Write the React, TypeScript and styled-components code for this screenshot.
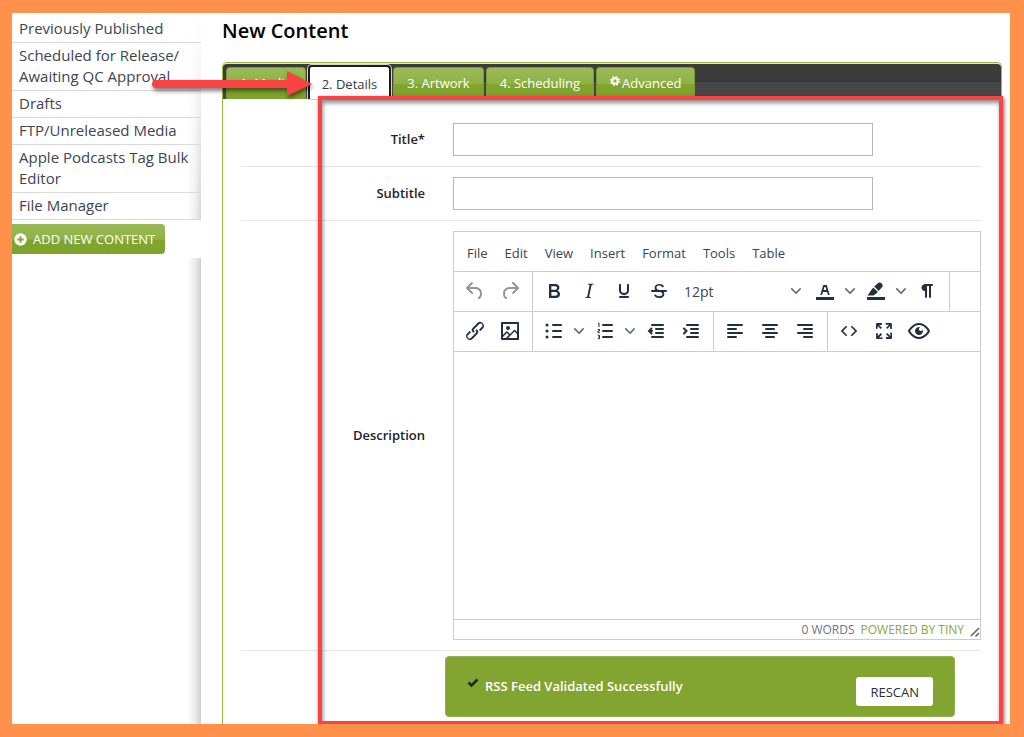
import React from "react";
import styled, { createGlobalStyle, css } from "styled-components";

const GlobalStyle = createGlobalStyle`
  *, *::before, *::after { box-sizing: border-box; }
  body { margin: 0; background: #ff914d; }
  body, button, input, select { font-family: "Open Sans", "Noto Sans", sans-serif; }
  button { cursor: pointer; }
`;

const Frame = styled.div`
  display: flex;
  min-height: 100vh;
  padding: 13px 14px 13px 12px;
  background: #ff914d;
`;

const Page = styled.div`
  position: relative;
  display: flex;
  flex: 1;
  min-width: 0;
  overflow: hidden;
  background: #fff;
`;

const Sidebar = styled.nav`
  display: flex;
  flex-direction: column;
  flex: 0 0 189px;
  padding-top: 3px;
  background: #fff;
`;

const SideList = styled.ul`
  margin: 0;
  padding: 0;
  list-style: none;
  background:
    linear-gradient(to bottom, #fff 0, rgba(255, 255, 255, 0) 100%),
    linear-gradient(to left, #d6d6d6 0, #f0f0f0 6px, rgba(255, 255, 255, 0) 14px);
`;

const SideItem = styled.li`
  padding: 2px 6px 3px 7px;
  border-bottom: 1px solid #d9d9d9;
  font-size: 15px;
  line-height: 21px;
`;

const SideLink = styled.a`
  color: #3d4550;
  text-decoration: none;
`;

const greenFill = css`
  background: linear-gradient(to bottom, #9aba57 0, #8fb247 50%, #80a42e 55%, #7fa42c 100%);
`;

const AddButton = styled.button`
  display: flex;
  align-items: center;
  align-self: flex-start;
  gap: 6px;
  height: 30px;
  margin: 4px 0;
  padding: 0 10px 0 2px;
  border: 0;
  border-radius: 0 4px 4px 0;
  ${greenFill}
  color: #fff;
  font-size: 13px;
  line-height: 20px;
  white-space: nowrap;
`;

const SideFill = styled.div`
  flex: 1;
  background: linear-gradient(to left, #cfcfcf 0, #e9e9e9 5px, rgba(255, 255, 255, 0) 14px);
`;

const Main = styled.main`
  display: flex;
  flex-direction: column;
  flex: 1;
  min-width: 0;
  padding: 0 8px 0 21px;
`;

const Heading = styled.h1`
  margin: 0 0 13px;
  color: #000;
  font-size: 20px;
  font-weight: 600;
  line-height: 36px;
`;

const Panel = styled.section`
  position: relative;
  flex: 1;
  border: 1px solid #93ba45;
  border-bottom: 0;
  border-radius: 5px 5px 0 0;
`;

const TabBar = styled.div`
  display: flex;
  align-items: flex-end;
  gap: 2px;
  height: 36px;
  padding: 0 3px;
  border-top: 1px solid #dfe5d6;
  border-radius: 4px 4px 0 0;
  background: linear-gradient(to bottom, #3b3b3b 0, #3b3b3b 50%, #464646 51%, #464646 100%);
`;

const Tab = styled.button<{ $active?: boolean }>`
  display: flex;
  align-items: center;
  gap: 2px;
  height: 32px;
  padding: 0 13px 1px;
  border: 1px solid #7c9c33;
  border-bottom: 0;
  border-radius: 4px 4px 0 0;
  ${greenFill}
  color: #fff;
  font-size: 13px;
  line-height: 20px;
  white-space: nowrap;

  ${(p) =>
    p.$active &&
    css`
      height: 34px;
      padding: 1px 12px 0;
      border: 2px solid #1c1c1c;
      border-bottom: 0;
      box-shadow: 0 0 0 1px #d5d5d5;
      background: #fff;
      color: #333b45;
    `}
`;

const Form = styled.form`
  padding: 14px 20px 0 18px;
`;

const Row = styled.div<{ $last?: boolean }>`
  display: grid;
  grid-template-columns: 184px minmax(0, 1fr);
  column-gap: ${(p) => (p.$last ? "20px" : "28px")};
  align-items: center;
  padding: ${(p) => (p.$last ? "5px 0" : "10px 0")};
  border-bottom: ${(p) => (p.$last ? "0" : "1px solid #e6e6e6")};
`;

const Label = styled.label`
  padding-bottom: 2px;
  color: #1f2329;
  font-size: 13px;
  font-weight: 600;
  line-height: 20px;
  text-align: right;
`;

const TextInput = styled.input`
  width: 100%;
  max-width: 420px;
  height: 33px;
  padding: 0 8px;
  border: 1px solid #b5b5b5;
  background: #fff;
  font-size: 14px;
`;

const Editor = styled.div`
  display: flex;
  flex-direction: column;
  border: 1px solid #ccc;
  background: #fff;
`;

const MenuBar = styled.div`
  display: flex;
  align-items: center;
  gap: 17px;
  height: 40px;
  padding: 2px 13px 0;
  border-bottom: 1px solid #ccc;
`;

const MenuButton = styled.button`
  padding: 0;
  border: 0;
  background: none;
  color: #3a4452;
  font-size: 13px;
  line-height: 20px;
`;

const Toolbar = styled.div`
  display: flex;
  height: 40px;
  border-bottom: 1px solid #ccc;
`;

const Group = styled.div<{ $open?: boolean }>`
  display: flex;
  align-items: center;
  padding: 0 5px 1px 3px;
  border-right: ${(p) => (p.$open ? "0" : "1px solid #ccc")};
`;

const ToolButton = styled.button<{ $dim?: boolean }>`
  display: flex;
  align-items: center;
  justify-content: center;
  width: 35px;
  height: 34px;
  padding: 0;
  border: 0;
  background: none;
  color: #222f3e;
  opacity: ${(p) => (p.$dim ? 0.5 : 1)};
`;

const ArrowButton = styled(ToolButton)`
  width: 16px;
  opacity: 0.7;
`;

const SizePicker = styled.div`
  display: grid;
  align-items: center;
  width: 131px;

  > * { grid-area: 1 / 1; }
  > svg { justify-self: end; margin-right: 6px; pointer-events: none; opacity: 0.7; }
`;

const SizeSelect = styled.select`
  width: 100%;
  height: 34px;
  padding: 0 8px;
  border: 0;
  appearance: none;
  background: none;
  color: #3a4452;
  font-size: 14px;
`;

const EditArea = styled.div`
  height: 267px;
  outline: 0;
`;

const StatusBar = styled.div`
  display: flex;
  align-items: center;
  justify-content: flex-end;
  gap: 6px;
  height: 20px;
  border-top: 1px solid #ccc;
  color: #6c7580;
  font-size: 12px;
  line-height: 18px;
`;

const TinyLink = styled.a`
  color: #86a93c;
  text-decoration: none;
`;

const Notice = styled.div`
  display: flex;
  align-items: center;
  max-width: 510px;
  height: 61px;
  padding: 0 21px;
  border: 1px solid #92b04b;
  border-radius: 4px;
  background: #82a431;
  color: #fff;
`;

const NoticeText = styled.span`
  flex: 1;
  margin-left: 6px;
  padding-bottom: 2px;
  font-size: 13px;
  font-weight: 600;
  line-height: 20px;
`;

const RescanButton = styled.button`
  align-self: flex-end;
  height: 29px;
  margin-bottom: 10px;
  padding: 0 14px;
  border: 0;
  border-radius: 3px;
  background: #fff;
  color: #2b2f36;
  font-size: 13px;
  line-height: 20px;
`;

const Highlight = styled.div`
  position: absolute;
  top: 33px;
  right: -2px;
  bottom: -1px;
  left: 95px;
  border: 4px solid #fb4343;
  box-shadow: 1px 2px 4px rgba(0, 0, 0, 0.6), inset 1px 3px 4px rgba(0, 0, 0, 0.45);
  pointer-events: none;
`;

const Arrow = styled.svg`
  position: absolute;
  top: 4px;
  left: -74px;
  overflow: visible;
  filter: drop-shadow(1px 3px 2px rgba(0, 0, 0, 0.5));
  pointer-events: none;
`;

const paths: Record<string, string> = {
  undo: "M6.4 8H12c3.7 0 6.2 2 6.8 5.1.6 2.7-.4 5.6-2.3 6.8a1 1 0 01-1-1.8c1.1-.6 1.8-2.7 1.4-4.6-.5-2.1-2.1-3.5-4.9-3.5H6.4l3.3 3.3a1 1 0 11-1.4 1.4l-5-5a1 1 0 010-1.4l5-5a1 1 0 011.4 1.4L6.4 8z",
  redo: "M17.6 10H12c-2.8 0-4.4 1.4-4.9 3.5-.4 2 .3 4 1.4 4.6a1 1 0 11-1 1.8c-2-1.2-2.9-4.1-2.3-6.8.6-3 3-5.1 6.8-5.1h5.6l-3.3-3.3a1 1 0 111.4-1.4l5 5a1 1 0 010 1.4l-5 5a1 1 0 01-1.4-1.4l3.3-3.3z",
  bold: "M7.8 19c-.3 0-.5 0-.6-.2l-.2-.5V5.7c0-.2 0-.4.2-.5l.6-.2h5c1.5 0 2.7.3 3.5 1 .7.6 1.1 1.4 1.1 2.5a3 3 0 01-.6 1.9c-.4.6-1 1-1.6 1.2.4.1.9.3 1.3.6s.8.7 1 1.2c.4.4.5 1 .5 1.6 0 1.3-.4 2.3-1.3 3-.8.7-2.1 1-3.8 1H7.8zm5-8.3c.6 0 1.2-.1 1.6-.5.4-.3.6-.7.6-1.3 0-1.1-.8-1.7-2.3-1.7H9.3v3.5h3.4zm.5 6c.7 0 1.3-.1 1.7-.4.4-.4.6-.9.6-1.5s-.2-1-.7-1.4c-.4-.3-1-.4-2-.4H9.4v3.8h4z",
  italic: "M16.7 4.7l-.1.9h-.3c-.6 0-1 0-1.4.3-.3.3-.4.6-.5 1.1l-2.1 9.8v.6c0 .5.4.8 1.4.8h.2l-.2.8H8l.2-.8h.2c1.1 0 1.8-.5 2-1.5l2-9.8.1-.5c0-.6-.4-.8-1.4-.8h-.3l.2-.9h5.8z",
  underline: "M16 5c.6 0 1 .4 1 1v5.5a4 4 0 01-.4 1.8l-1 1.4a5.3 5.3 0 01-5.5 1 5 5 0 01-1.6-1c-.5-.4-.8-.9-1.1-1.4a4 4 0 01-.4-1.8V6c0-.6.4-1 1-1s1 .4 1 1v5.5c0 .3 0 .6.2 1l.6.7a3.3 3.3 0 002.2.8 3.4 3.4 0 002.2-.8c.3-.2.4-.5.6-.8l.2-.9V6c0-.6.4-1 1-1zM8 17h8c.6 0 1 .4 1 1s-.4 1-1 1H8a1 1 0 010-2z",
  strike: "M15.6 8.5c-.5-.7-1-1.1-1.3-1.3-.6-.4-1.3-.6-2-.6-2.7 0-2.8 1.7-2.8 2.1 0 1.6 1.8 2 3.2 2.3 4.4.9 4.6 2.8 4.6 3.9 0 1.4-.7 4.1-5 4.1A6.2 6.2 0 017 16.4l1.5-1.1c.4.6 1.6 2 3.7 2 1.6 0 2.5-.4 3-1.2.4-.8.3-2-.8-2.6-.7-.4-1.6-.7-2.9-1-1-.2-3.9-.8-3.9-3.6C7.6 6 10.3 5 12.4 5c2.9 0 4.2 1.6 4.7 2.4l-1.5 1.1z",
  link: "M6.2 12.3a1 1 0 011.4 1.4l-2.1 2a2 2 0 102.7 2.8l4.8-4.8a1 1 0 000-1.4 1 1 0 111.4-1.3 2.9 2.9 0 010 4L9.6 20a3.9 3.9 0 01-5.5-5.5l2-2zm11.6-.6a1 1 0 01-1.4-1.4l2-2a2 2 0 10-2.6-2.8L11 10.3a1 1 0 000 1.4A1 1 0 119.6 13a2.9 2.9 0 010-4L14.4 4a3.9 3.9 0 015.5 5.5l-2 2z",
  image: "M5 15.7l3.3-3.2c.3-.3.7-.3 1 0L12 15l4.1-4c.3-.4.8-.4 1 0l2 1.9V5H5v10.7zM5 18V19h3l2.8-2.9-2-2L5 17.9zm14-3l-2.5-2.4-6.4 6.5H19v-4zM4 3h16c.6 0 1 .4 1 1v16c0 .6-.4 1-1 1H4a1 1 0 01-1-1V4c0-.6.4-1 1-1zm6 8a2 2 0 100-4 2 2 0 000 4z",
  code: "M9.8 15.7c.3.3.3.8 0 1-.3.4-.9.4-1.2 0l-4.4-4.1a.8.8 0 010-1.2l4.4-4.2c.3-.3.9-.3 1.2 0 .3.3.3.8 0 1.1L6 12l3.8 3.7zM14.2 15.7c-.3.3-.3.8 0 1 .4.4.9.4 1.2 0l4.4-4.1c.3-.3.3-.9 0-1.2l-4.4-4.2a.8.8 0 00-1.2 0c-.3.3-.3.8 0 1.1L18 12l-3.8 3.7z",
  fullscreen: "M15.3 10l-1.2-1.3 2.9-3h-2.3a.9.9 0 110-1.7H19c.5 0 .9.4.9.9v4.4a.9.9 0 11-1.8 0V7l-2.9 3zm0 4l3 3v-2.3a.9.9 0 111.7 0V19c0 .5-.4.9-.9.9h-4.4a.9.9 0 110-1.8H17l-3-2.9 1.3-1.2zM10 15.4l-2.9 3h2.3a.9.9 0 110 1.7H5a.9.9 0 01-.9-.9v-4.4a.9.9 0 111.8 0V17l2.9-3 1.2 1.3zM8.7 10L5.7 7v2.3a.9.9 0 01-1.7 0V5c0-.5.4-.9.9-.9h4.4a.9.9 0 010 1.8H7l3 2.9-1.3 1.2z",
  preview: "M3.5 12.5c.5.8 1.1 1.6 1.8 2.3 2 2 4.2 3.2 6.7 3.2s4.7-1.2 6.7-3.2a16.2 16.2 0 002.1-2.8 15.7 15.7 0 00-2.1-2.8c-2-2-4.2-3.2-6.7-3.2a9.3 9.3 0 00-6.7 3.2A16.2 16.2 0 003.2 12c0 .2.2.3.3.5zm-2.4-1l.7-1.2L4 7.8C6.2 5.4 8.9 4 12 4c3 0 5.8 1.4 8.1 3.8a18.2 18.2 0 012.8 3.7v1l-.7 1.2-2.1 2.5c-2.3 2.4-5 3.8-8.1 3.8-3 0-5.8-1.4-8.1-3.8a18.2 18.2 0 01-2.8-3.7 1 1 0 010-1zm12-3.3a2 2 0 102.7 2.6 4 4 0 11-2.6-2.6z",
  color: "M3 18h18v3H3zM8.7 16h-.8a.5.5 0 01-.5-.6l2.7-9c.1-.3.3-.4.5-.4h2.8c.2 0 .4.1.5.4l2.7 9a.5.5 0 01-.5.6h-.8a.5.5 0 01-.4-.4l-.7-2.2c0-.3-.3-.4-.5-.4h-3.4c-.2 0-.4.1-.5.4l-.7 2.2c0 .3-.2.4-.4.4zm2.6-7.6l-.6 2a.5.5 0 00.5.6h1.6a.5.5 0 00.5-.6l-.6-2c0-.3-.3-.4-.5-.4h-.4c-.2 0-.4.1-.5.4z",
  highlight: "M3 18h18v3H3zM3.500 16.600L7 11.500l2.300-3.100 4.600 4.500-3.300 2.900c-1 .8-2.100.8-3.500.8zM10.200 7.500l3.400-3.100a2.900 2.900 0 014.100 4.100l-3 3.500z",
  pilcrow: "M10 5h7a1 1 0 010 2h-1v11a1 1 0 01-2 0V7h-2v11a1 1 0 01-2 0v-6c-.5 0-1 0-1.4-.3A3.4 3.4 0 016.8 10a3.3 3.3 0 010-2.8 3.4 3.4 0 011.8-1.8L10 5z",
};

const strokes: Record<string, string> = {
  bullets: "M11 6h8M11 12h8M11 18h8",
  numbers: "M10 6h9M10 12h9M10 18h9",
  outdent: "M8 6h11M12 10h7M12 14h7M8 18h11M7.500 9.500L5 12l2.500 2.500M5 12h3",
  indent: "M8 6h11M12 10h7M12 14h7M8 18h11M5 9.500L7.500 12 5 14.500",
  left: "M5 6h14M5 10h8M5 14h14M5 18h8",
  center: "M5 6h14M8 10h8M5 14h14M8 18h8",
  right: "M5 6h14M11 10h8M5 14h14M11 18h8",
};

const Icon = ({ name }: { name: string }) =>
  paths[name] ? (
    <svg width="24" height="24" viewBox="0 0 24 24" fill="currentColor" fillRule="evenodd" aria-hidden="true">
      <path d={paths[name]} />
      {name === "strike" && <path d="M5 11h14a1 1 0 010 2H5a1 1 0 010-2z" />}
    </svg>
  ) : (
    <svg width="24" height="24" viewBox="0 0 24 24" fill="none" stroke="currentColor" strokeWidth="2" strokeLinecap="round" aria-hidden="true">
      <path d={strokes[name]} />
      {name === "bullets" && <path d="M5 6h.01M5 12h.01M5 18h.01" strokeWidth="3" />}
      {name === "numbers" && (
        <path
          d="M5 4.500l1-.5v4M4.800 10.500h1.700v1.500H5v1.700h1.700M4.800 16.300h1.700v3.400H4.800M5.200 18h1.300"
          strokeWidth="1"
          strokeLinecap="butt"
        />
      )}
    </svg>
  );

const Chevron = () => (
  <svg width="10" height="10" viewBox="0 0 10 10" fill="#222f3e" aria-hidden="true">
    <path d="M8.700 2.200c.3-.3.800-.3 1 0 .4.400.4.900 0 1.200L5.700 7.800c-.3.300-.9.300-1.200 0L.2 3.400a.8.8 0 010-1.200c.3-.3.800-.3 1.100 0L5 6l3.700-3.800z" />
  </svg>
);

const Tool = ({ name, label, dim }: { name: string; label: string; dim?: boolean }) => (
  <ToolButton type="button" aria-label={label} $dim={dim}>
    <Icon name={name} />
  </ToolButton>
);

const SplitTool = ({ name, label }: { name: string; label: string }) => (
  <>
    <Tool name={name} label={label} />
    <ArrowButton type="button" aria-label={`${label} options`}>
      <Chevron />
    </ArrowButton>
  </>
);

const sideLinks = [
  "Previously Published",
  "Scheduled for Release/ Awaiting QC Approval",
  "Drafts",
  "FTP/Unreleased Media",
  "Apple Podcasts Tag Bulk Editor",
  "File Manager",
];

const menus = ["File", "Edit", "View", "Insert", "Format", "Tools", "Table"];

export default function App() {
  return (
    <Frame>
      <GlobalStyle />
      <Page>
        <Sidebar>
          <SideList>
            {sideLinks.map((text) => (
              <SideItem key={text}>
                <SideLink href="#">{text}</SideLink>
              </SideItem>
            ))}
          </SideList>
          <AddButton type="button">
            <svg width="13" height="13" viewBox="0 0 13 13" aria-hidden="true">
              <circle cx="6.5" cy="6.5" r="6.2" fill="#fff" />
              <path d="M6.500 3.300v6.400M3.300 6.500h6.400" stroke="#86a93a" strokeWidth="2" />
            </svg>
            ADD NEW CONTENT
          </AddButton>
          <SideFill />
        </Sidebar>

        <Main>
          <Heading>New Content</Heading>
          <Panel>
            <TabBar role="tablist">
              <Tab type="button" role="tab">1. Media</Tab>
              <Tab type="button" role="tab" aria-selected="true" $active>2. Details</Tab>
              <Tab type="button" role="tab">3. Artwork</Tab>
              <Tab type="button" role="tab">4. Scheduling</Tab>
              <Tab type="button" role="tab">
                <svg width="10" height="16" viewBox="0 0 10 16" aria-hidden="true">
                  <g fill="none" stroke="#fff">
                    <circle cx="5" cy="6" r="2.700" strokeWidth="2" />
                    <circle cx="5" cy="6" r="4.200" strokeWidth="1.600" strokeDasharray="1.700 1.600" />
                  </g>
                </svg>
                Advanced
              </Tab>
            </TabBar>

            <Form onSubmit={(e) => e.preventDefault()}>
              <Row>
                <Label htmlFor="title">Title*</Label>
                <TextInput id="title" type="text" />
              </Row>
              <Row>
                <Label htmlFor="subtitle">Subtitle</Label>
                <TextInput id="subtitle" type="text" />
              </Row>
              <Row>
                <Label as="span" id="description-label">Description</Label>
                <Editor>
                  <MenuBar>
                    {menus.map((m) => (
                      <MenuButton type="button" key={m}>{m}</MenuButton>
                    ))}
                  </MenuBar>
                  <Toolbar>
                    <Group>
                      <Tool name="undo" label="Undo" dim />
                      <Tool name="redo" label="Redo" dim />
                    </Group>
                    <Group>
                      <Tool name="bold" label="Bold" />
                      <Tool name="italic" label="Italic" />
                      <Tool name="underline" label="Underline" />
                      <Tool name="strike" label="Strikethrough" />
                      <SizePicker>
                        <SizeSelect aria-label="Font size" defaultValue="12pt">
                          <option>12pt</option>
                        </SizeSelect>
                        <Chevron />
                      </SizePicker>
                      <SplitTool name="color" label="Text color" />
                      <SplitTool name="highlight" label="Background color" />
                      <Tool name="pilcrow" label="Show invisible characters" />
                    </Group>
                  </Toolbar>
                  <Toolbar>
                    <Group>
                      <Tool name="link" label="Insert link" />
                      <Tool name="image" label="Insert image" />
                    </Group>
                    <Group>
                      <SplitTool name="bullets" label="Bullet list" />
                      <SplitTool name="numbers" label="Numbered list" />
                      <Tool name="outdent" label="Decrease indent" />
                      <Tool name="indent" label="Increase indent" />
                    </Group>
                    <Group>
                      <Tool name="left" label="Align left" />
                      <Tool name="center" label="Align center" />
                      <Tool name="right" label="Align right" />
                    </Group>
                    <Group $open>
                      <Tool name="code" label="Source code" />
                      <Tool name="fullscreen" label="Fullscreen" />
                      <Tool name="preview" label="Preview" />
                    </Group>
                  </Toolbar>
                  <EditArea
                    contentEditable
                    suppressContentEditableWarning
                    role="textbox"
                    aria-multiline="true"
                    aria-labelledby="description-label"
                  />
                  <StatusBar>
                    <span>0 WORDS</span>
                    <TinyLink href="#">POWERED BY TINY</TinyLink>
                    <svg width="10" height="16" viewBox="0 0 10 16" fill="none" stroke="#56606c" strokeWidth="1.500" aria-hidden="true">
                      <path d="M1 14L9 6M5.500 14.500L9 11" />
                    </svg>
                  </StatusBar>
                </Editor>
              </Row>
              <Row $last>
                <span />
                <Notice role="status">
                  <svg width="12" height="18" viewBox="0 0 12 18" aria-hidden="true">
                    <path d="M1.500 4.500l3 3L10.500 1.500" fill="none" stroke="#22262b" strokeWidth="2.600" />
                  </svg>
                  <NoticeText>RSS Feed Validated Successfully</NoticeText>
                  <RescanButton type="button">RESCAN</RescanButton>
                </Notice>
              </Row>
            </Form>

            <Highlight />
            <Arrow width="164" height="32" viewBox="0 0 164 32" aria-hidden="true">
              <path d="M7 17H144" stroke="#fb4343" strokeWidth="8" strokeLinecap="round" />
              <path d="M138 4L163 17l-25 12z" fill="#fb4343" />
            </Arrow>
          </Panel>
        </Main>
      </Page>
    </Frame>
  );
}
